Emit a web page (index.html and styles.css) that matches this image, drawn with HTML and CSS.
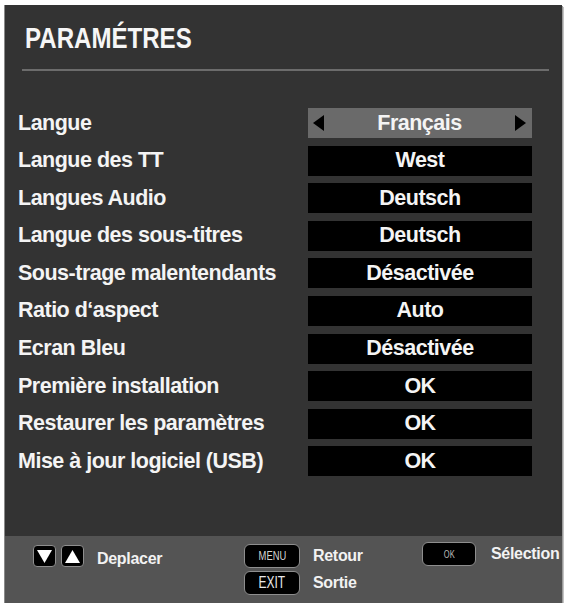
FILE: index.html
```html
<!DOCTYPE html>
<html lang="fr">
<head>
<meta charset="utf-8">
<title>Paramètres</title>
<link rel="stylesheet" href="styles.css">
</head>
<body>
<div class="panel">
  <div class="main">
    <h1 class="title"><span>PARAMÉTRES</span></h1>
    <div class="rule"></div>
    <div class="rows">
      <div class="row"><span class="label">Langue</span><span class="value sel"><svg class="arr" viewBox="0 0 11 16"><path d="M11 0L0 8L11 16Z"/></svg><span class="vt">Français</span><svg class="arr" viewBox="0 0 11 16"><path d="M0 0L11 8L0 16Z"/></svg></span></div>
      <div class="row"><span class="label">Langue des TT</span><span class="value"><span class="vt">West</span></span></div>
      <div class="row"><span class="label">Langues Audio</span><span class="value"><span class="vt">Deutsch</span></span></div>
      <div class="row"><span class="label">Langue des sous-titres</span><span class="value"><span class="vt">Deutsch</span></span></div>
      <div class="row"><span class="label">Sous-trage malentendants</span><span class="value"><span class="vt">Désactivée</span></span></div>
      <div class="row"><span class="label">Ratio d‘aspect</span><span class="value"><span class="vt">Auto</span></span></div>
      <div class="row"><span class="label">Ecran Bleu</span><span class="value"><span class="vt">Désactivée</span></span></div>
      <div class="row"><span class="label">Première installation</span><span class="value"><span class="vt">OK</span></span></div>
      <div class="row"><span class="label">Restaurer les paramètres</span><span class="value"><span class="vt">OK</span></span></div>
      <div class="row"><span class="label">Mise à jour logiciel (USB)</span><span class="value"><span class="vt">OK</span></span></div>
    </div>
  </div>
  <div class="footer">
    <div class="group nav">
      <span class="key tri"><svg viewBox="0 0 15 13"><path d="M0 0H15L7.5 13Z"/></svg></span>
      <span class="key tri"><svg viewBox="0 0 15 13"><path d="M0 13H15L7.5 0Z"/></svg></span>
      <span class="ftext nav-text">Deplacer</span>
    </div>
    <div class="group menu">
      <span class="key btn"><span class="klabel small">MENU</span></span>
      <span class="ftext">Retour</span>
      <span class="key btn"><span class="klabel big">EXIT</span></span>
      <span class="ftext">Sortie</span>
    </div>
    <div class="group ok">
      <span class="key btn okbtn"><span class="klabel tiny">OK</span></span>
      <span class="ftext">Sélection</span>
    </div>
  </div>
</div>
</body>
</html>
```
FILE: styles.css
```css
html, body {
  margin: 0;
  padding: 0;
  background: #ffffff;
}
body {
  font-family: "Liberation Sans", Arial, sans-serif;
  color: #f4f4f4;
}
.panel {
  margin: 5px 0 0 5px;
  width: 557px;
  height: 598px;
  box-shadow: 1px 1px 0 #9a9a9a, 2px 2px 0 #c4c4c4, -1px 0 0 #8a8a8a;
  display: flex;
  flex-direction: column;
}
.main {
  height: 531px;
  background: #333333;
  box-sizing: border-box;
  padding: 16px 30px 0 13px;
}
.title {
  margin: 0 0 0 7px;
  font-size: 29px;
  line-height: 34px;
  font-weight: 700;
  color: #f6f6f6;
}
.title span {
  display: inline-block;
  transform: scaleX(0.83);
  transform-origin: left center;
}
.rule {
  margin: 14px 0 0 4px;
  width: 527px;
  height: 2px;
  background: #6c6c6c;
}
.rows {
  margin-top: 37px;
  display: grid;
  row-gap: 7.6px;
}
.row {
  height: 30px;
  display: flex;
  align-items: center;
  justify-content: space-between;
}
.label {
  font-size: 21.5px;
  font-weight: 700;
  letter-spacing: -0.5px;
  color: #f4f4f4;
}
.value {
  width: 224px;
  height: 30px;
  background: #000;
  display: flex;
  align-items: center;
  justify-content: center;
  font-size: 21.5px;
  font-weight: 700;
  letter-spacing: -0.5px;
  color: #f4f4f4;
}
.value.sel {
  background: #6a6a6a;
  justify-content: space-between;
  padding: 0 6px 0 5px;
  box-sizing: border-box;
}
.arr {
  width: 11px;
  height: 16px;
  fill: #000;
}
.footer {
  flex: 1;
  background: #545454;
  display: flex;
  align-items: flex-start;
  padding-top: 8px;
  box-sizing: border-box;
}
.group {
  display: flex;
  align-items: center;
}
.nav {
  width: 211px;
  margin-left: 28px;
  gap: 5px;
}
.nav-text {
  margin-left: 8px;
  margin-top: 6px;
}
.key {
  background: #000;
  border: 1.5px solid #8e8e8e;
  box-sizing: border-box;
  display: flex;
  align-items: center;
  justify-content: center;
}
.tri {
  width: 23px;
  height: 22px;
  border-radius: 4px;
}
.tri svg {
  width: 15px;
  height: 13px;
  fill: #ffffff;
}
.menu {
  width: 178px;
  display: grid;
  grid-template-columns: 56px auto;
  column-gap: 13px;
  row-gap: 3px;
  justify-content: start;
}
.btn {
  width: 56px;
  height: 24px;
  border-radius: 6px;
}
.okbtn {
  width: 54px;
}
.ok {
  gap: 15px;
  margin-top: -2px;
}
.ftext {
  font-size: 16px;
  font-weight: 700;
  letter-spacing: -0.3px;
  color: #f2f2f2;
}
.klabel {
  display: inline-block;
  color: #d6d6d6;
  transform: scaleX(0.75);
}
.klabel.small {
  font-size: 12.5px;
}
.klabel.big {
  font-size: 16px;
  color: #e8e8e8;
}
.klabel.tiny {
  font-size: 10px;
  color: #bbbbbb;
}
```
